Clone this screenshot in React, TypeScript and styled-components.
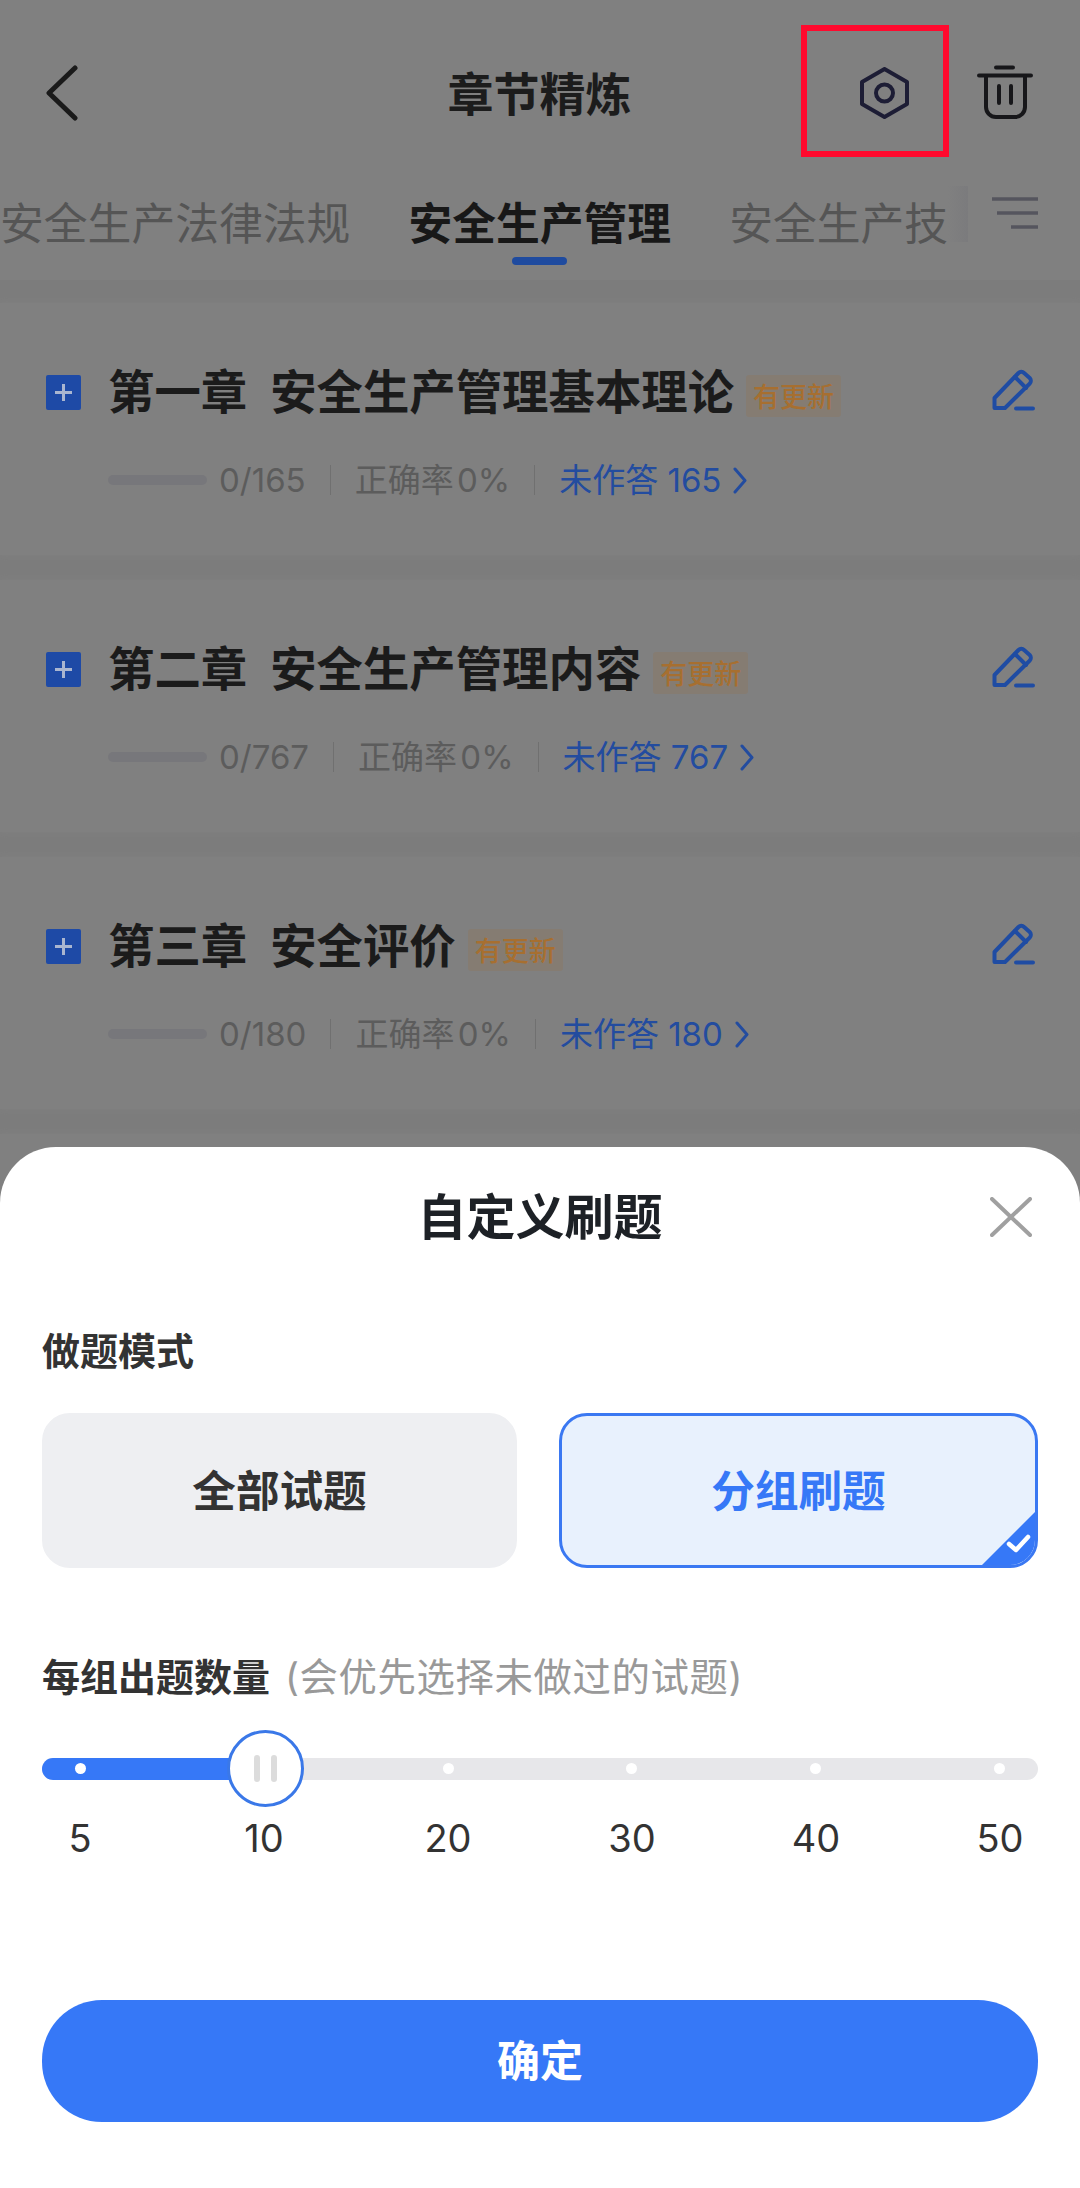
import React from 'react'
import styled, { createGlobalStyle } from 'styled-components'

const FONT = `Inter, "Noto Sans CJK SC", sans-serif`
const CJK = `"Noto Sans CJK SC", sans-serif`

const GlobalStyle = createGlobalStyle`
  html, body {
    margin: 0;
    padding: 0;
    background: #808080;
  }
  * {
    box-sizing: border-box;
  }
`

const Screen = styled.div`
  position: relative;
  width: 1080px;
  height: 2188px;
  overflow: hidden;
  background: #808080;
  font-family: ${FONT};
`

const NavBar = styled.header`
  display: grid;
  grid-template-columns: 1fr auto 1fr;
  align-items: center;
  height: 186px;
  padding: 0 47px 0 46px;
`

const NavTitle = styled.h1`
  margin: 0 0 5px;
  font-family: ${CJK};
  font-size: 46px;
  line-height: 60px;
  font-weight: 700;
  color: #1c1c1c;
`

const NavActions = styled.div`
  display: flex;
  justify-content: flex-end;
  align-items: center;
  gap: 68px;
`

const TrashIcon = styled.svg`
  margin-bottom: 2px;
`

const TabRow = styled.div`
  display: flex;
  align-items: flex-start;
  height: 94px;
`

const TabStrip = styled.div`
  display: flex;
  gap: 58px;
  width: 948px;
  padding-top: 4px;
  overflow: hidden;
`

const Tab = styled.div`
  display: flex;
  flex-direction: column;
  align-items: center;
  flex: none;
`

const TabLabel = styled.span<{ $active?: boolean }>`
  font-family: ${CJK};
  font-size: 43.8px;
  line-height: 62px;
  font-weight: ${p => (p.$active ? 700 : 400)};
  color: ${p => (p.$active ? '#181818' : '#555555')};
`

const TabMark = styled.i`
  display: block;
  width: 55px;
  height: 8px;
  margin-top: 5px;
  border-radius: 4px;
  background: #1f4b9f;
`

const TabFade = styled.div`
  flex: none;
  width: 20px;
  height: 56px;
  background: linear-gradient(90deg, #808080, #7b7b7d);
`

const MenuIcon = styled.svg`
  flex: none;
  margin: 11px 0 0 24px;
`

const ChapterList = styled.section`
  display: flex;
  flex-direction: column;
  gap: 25px;
  padding-top: 23px;
  background: #7c7c7c;
`

const ChapterCard = styled.article`
  height: 252px;
  padding: 60px 45px 0 46px;
  background: #808080;
  box-shadow: 0 0 8px 1px #808080;
`

const ChapterHead = styled.div`
  display: flex;
  align-items: center;
  height: 58px;
`

const AddBox = styled.span`
  display: flex;
  align-items: center;
  justify-content: center;
  flex: none;
  width: 35px;
  height: 35px;
  margin-right: 27px;
  border-radius: 2px;
  background: #1e4aa6;
`

const ChapterName = styled.h2`
  margin: 0 0 6px;
  font-family: ${CJK};
  font-size: 46.4px;
  line-height: 58px;
  font-weight: 700;
  color: #1b1b1b;
  white-space: nowrap;
`

const ChapterNo = styled.span`
  margin-right: 23px;
`

const NewBadge = styled.span`
  flex: none;
  width: 95px;
  height: 42px;
  margin: 8px 0 0 12px;
  font-family: ${CJK};
  font-size: 27px;
  font-weight: 500;
  line-height: 41px;
  text-align: center;
  color: #a76f30;
  background: #857c72;
  border-radius: 3px;
`

const EditIcon = styled.svg`
  flex: none;
  margin: 0 0 6px auto;
`

const StatRow = styled.div`
  display: flex;
  align-items: center;
  gap: 24px;
  height: 44px;
  margin: 37px 0 0 62px;
  font-size: 33px;
  line-height: 44px;
  color: #5c5c5c;
`

const Progress = styled.div`
  display: flex;
  align-items: center;
  gap: 12px;
`

const ProgressBar = styled.i`
  display: block;
  width: 99px;
  height: 10px;
  border-radius: 5px;
  background: #77777b;
`

const StatLine = styled.i`
  display: block;
  width: 1px;
  height: 30px;
  background: #707070;
`

const Accuracy = styled.span`
  word-spacing: -6px;
`

const StatLink = styled.span`
  display: flex;
  align-items: center;
  gap: 12px;
  color: #234c9f;
`

const Sheet = styled.div`
  position: absolute;
  left: 0;
  right: 0;
  bottom: 0;
  height: 1041px;
  padding: 40px 42px 0;
  background: #ffffff;
  border-radius: 56px 56px 0 0;
`

const SheetHead = styled.div`
  display: grid;
  grid-template-columns: 1fr auto 1fr;
  align-items: center;
  height: 60px;
`

const SheetTitle = styled.h2`
  grid-column: 2;
  margin: -6px 0 0;
  font-family: ${CJK};
  font-size: 49px;
  line-height: 60px;
  font-weight: 700;
  color: #1d2126;
`

const CloseIcon = styled.svg`
  justify-self: end;
  margin-right: 6px;
`

const SectionTitle = styled.div<{ $gap: number }>`
  margin-top: ${p => p.$gap}px;
  font-family: ${CJK};
  font-size: 38px;
  line-height: 50px;
  font-weight: 700;
  color: #333333;
  white-space: nowrap;
`

const Hint = styled.span`
  margin-left: 15px;
  font-family: ${FONT};
  font-weight: 400;
  font-size: 38.4px;
  letter-spacing: 0.6px;
  color: #999999;
`

const ModeGrid = styled.div`
  display: grid;
  grid-template-columns: 475px 1fr;
  gap: 42px;
  margin-top: 39px;
`

const ModeCard = styled.div<{ $selected?: boolean }>`
  position: relative;
  display: flex;
  align-items: center;
  justify-content: center;
  height: 155px;
  padding-bottom: 5px;
  overflow: hidden;
  border-radius: 28px;
  border: 3px solid ${p => (p.$selected ? '#3a78f2' : '#eeeff2')};
  background: ${p => (p.$selected ? '#e8f1fd' : '#eeeff2')};
  font-family: ${CJK};
  font-size: 43.6px;
  font-weight: 700;
  color: ${p => (p.$selected ? '#3678f7' : '#333333')};
`

const CheckCorner = styled.svg`
  position: absolute;
  right: 0;
  bottom: 0;
`

const Slider = styled.div`
  position: relative;
  display: flex;
  align-items: center;
  height: 77px;
  margin-top: 28px;
`

const Track = styled.div`
  position: relative;
  display: flex;
  align-items: center;
  justify-content: space-between;
  width: 100%;
  height: 22px;
  padding: 0 33px;
  overflow: hidden;
  border-radius: 11px;
  background: #e7e7ea;
`

const TrackFill = styled.i`
  position: absolute;
  left: 0;
  top: 0;
  bottom: 0;
  background: #3678f7;
`

const TrackDot = styled.i`
  position: relative;
  display: block;
  width: 11px;
  height: 11px;
  border-radius: 50%;
  background: #ffffff;
`

const Thumb = styled.div`
  position: absolute;
  top: 0;
  display: flex;
  align-items: center;
  justify-content: center;
  gap: 11px;
  width: 77px;
  height: 77px;
  border-radius: 50%;
  border: 3px solid #3a78e8;
  background: #ffffff;
`

const ThumbBar = styled.i`
  display: block;
  width: 6px;
  height: 27px;
  border-radius: 3px;
  background: #dcdcdc;
`

const ScaleRow = styled.div`
  display: flex;
  justify-content: space-between;
  margin-top: 9px;
  padding: 0 8px;
`

const ScaleLabel = styled.span`
  width: 60px;
  font-size: 38px;
  line-height: 44px;
  text-align: center;
  color: #333333;
`

const ConfirmButton = styled.button`
  display: block;
  width: 100%;
  height: 122px;
  margin-top: 140px;
  padding: 0 0 7px;
  border: 0;
  border-radius: 60px;
  background: #3678f7;
  font-family: ${CJK};
  font-size: 43px;
  font-weight: 700;
  color: #ffffff;
`

const Annotation = styled.div`
  position: absolute;
  left: 801px;
  top: 25px;
  width: 148px;
  height: 132px;
  border: 6px solid #ff0a2e;
`

const chapters = [
  { no: '第一章', name: '安全生产管理基本理论', total: 165 },
  { no: '第二章', name: '安全生产管理内容', total: 767 },
  { no: '第三章', name: '安全评价', total: 180 },
  { no: '第四章', name: '', total: 0 },
]

const steps = [5, 10, 20, 30, 40, 50]
const thumbCenter = 223

const App: React.FC = () => (
  <Screen>
    <GlobalStyle />
    <NavBar>
      <svg width="32" height="56" viewBox="0 0 32 56" fill="none" stroke="#1a1a1a" strokeWidth="5" strokeLinecap="round" strokeLinejoin="round">
        <path d="M29 3 L3 28 L29 53" />
      </svg>
      <NavTitle>章节精炼</NavTitle>
      <NavActions>
        <svg width="49" height="52" viewBox="0 0 49 52" fill="none" stroke="#1d1d35" strokeWidth="4" strokeLinejoin="round">
          <path d="M24.5 2 L47 15 V37 L24.5 50 L2 37 V15 Z" />
          <circle cx="24.5" cy="26" r="8.5" />
        </svg>
        <TrashIcon width="56" height="54" viewBox="0 0 56 54" fill="none" stroke="#17171a" strokeWidth="4" strokeLinecap="round">
          <path d="M19 2.5 H36" />
          <path d="M2 10.5 H54" />
          <path d="M9 11 V42 a10 10 0 0 0 10 10 H38 a10 10 0 0 0 10 -10 V11" />
          <path d="M22 21 V38 M34 21 V38" />
        </TrashIcon>
      </NavActions>
    </NavBar>

    <TabRow>
      <TabStrip>
        <Tab><TabLabel>安全生产法律法规</TabLabel></Tab>
        <Tab>
          <TabLabel $active>安全生产管理</TabLabel>
          <TabMark />
        </Tab>
        <Tab><TabLabel>安全生产技</TabLabel></Tab>
      </TabStrip>
      <TabFade />
      <MenuIcon width="46" height="32" viewBox="0 0 46 32" fill="none" stroke="#55555e" strokeWidth="3.5">
        <path d="M0 2 H46 M5 16 H46 M19 30 H46" />
      </MenuIcon>
    </TabRow>

    <ChapterList>
      {chapters.map(c => (
        <ChapterCard key={c.no}>
          {c.total > 0 && (
            <>
              <ChapterHead>
                <AddBox>
                  <svg width="17" height="17" viewBox="0 0 17 17" stroke="#aab6d0" strokeWidth="3">
                    <path d="M8.5 0 V17 M0 8.5 H17" />
                  </svg>
                </AddBox>
                <ChapterName>
                  <ChapterNo>{c.no}</ChapterNo>
                  {c.name}
                </ChapterName>
                <NewBadge>有更新</NewBadge>
                <EditIcon width="43" height="44" viewBox="0 0 43 44" fill="none" stroke="#1f4ca3" strokeWidth="4" strokeLinejoin="round" strokeLinecap="round">
                  <path d="M2.5 31 L26.5 6 a4 4 0 0 1 5.6 0 l5.6 5 a4 4 0 0 1 0 5.6 L13 41 H2.5 Z" />
                  <path d="M23 10 L34 21" />
                  <path d="M24 41.5 H41" />
                </EditIcon>
              </ChapterHead>
              <StatRow>
                <Progress>
                  <ProgressBar />
                  <span>0/{c.total}</span>
                </Progress>
                <StatLine />
                <Accuracy>正确率 0%</Accuracy>
                <StatLine />
                <StatLink>
                  未作答 {c.total}
                  <svg width="14" height="27" viewBox="0 0 14 27" fill="none" stroke="#234c9f" strokeWidth="3" strokeLinecap="round" strokeLinejoin="round">
                    <path d="M2 2 L12 13.5 L2 25" />
                  </svg>
                </StatLink>
              </StatRow>
            </>
          )}
        </ChapterCard>
      ))}
    </ChapterList>

    <Sheet>
      <SheetHead>
        <SheetTitle>自定义刷题</SheetTitle>
        <CloseIcon width="42" height="40" viewBox="0 0 42 40" fill="none" stroke="#a0a0a0" strokeWidth="4" strokeLinecap="round">
          <path d="M2 2 L40 38 M40 2 L2 38" />
        </CloseIcon>
      </SheetHead>

      <SectionTitle $gap={77}>做题模式</SectionTitle>
      <ModeGrid>
        <ModeCard>全部试题</ModeCard>
        <ModeCard $selected>
          分组刷题
          <CheckCorner width="53" height="53" viewBox="0 0 53 53">
            <path d="M53 0 V53 H0 Z" fill="#3678f7" />
            <path d="M27 32 L34 38 L46 25" fill="none" stroke="#ffffff" strokeWidth="4.5" strokeLinecap="round" strokeLinejoin="round" />
          </CheckCorner>
        </ModeCard>
      </ModeGrid>

      <SectionTitle $gap={82}>
        每组出题数量
        <Hint>(会优先选择未做过的试题)</Hint>
      </SectionTitle>
      <Slider>
        <Track>
          <TrackFill style={{ width: thumbCenter }} />
          {steps.map(s => <TrackDot key={s} />)}
        </Track>
        <Thumb style={{ left: thumbCenter - 38.5 }}>
          <ThumbBar />
          <ThumbBar />
        </Thumb>
      </Slider>
      <ScaleRow>
        {steps.map(s => <ScaleLabel key={s}>{s}</ScaleLabel>)}
      </ScaleRow>

      <ConfirmButton>确定</ConfirmButton>
    </Sheet>

    <Annotation />
  </Screen>
)

export default App
